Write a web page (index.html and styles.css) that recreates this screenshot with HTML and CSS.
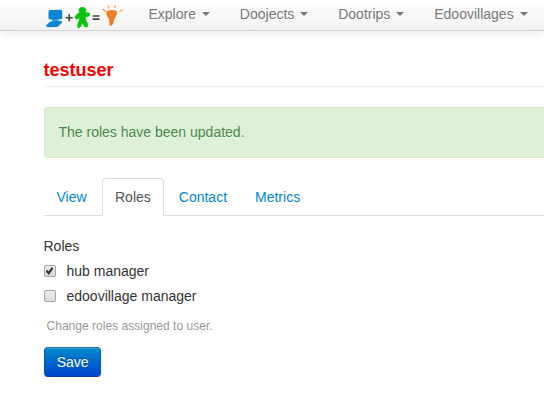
FILE: index.html
```html
<!DOCTYPE html>
<html lang="en">
<head>
<meta charset="utf-8">
<title>testuser</title>
<link rel="stylesheet" href="styles.css">
</head>
<body>
<header class="navbar">
  <a class="brand" href="#" aria-label="Home">
    <svg width="80" height="30" viewBox="0 0 80 30">
      <g fill="#0c86d4">
        <path d="M3.500 11.500Q3.500 10 5 10L15.500 9.800Q17.200 9.800 17.200 11.300L17.200 17.700Q17.200 19.200 15.700 19.200L5 19.500Q3.500 19.500 3.500 18Z"/>
        <path d="M7 19H13.500V22H7Z"/>
        <path d="M5 21.700L16 21Q18 21.500 16.700 23L13.500 26Q12.800 27 11.500 27L2.500 27.200Q.6 26.500 1.500 25Z"/>
      </g>
      <path d="M5.500 20.300H15.500" stroke="#8fcaf0" stroke-width=".6"/>
      <path d="M20.700 17.700H27.700M24.200 14.200V21.200" stroke="#444" stroke-width="1.600"/>
      <path d="M37.300 7.300C40.300 7.300 41.700 9.300 40.700 11.500L40.500 12.700L43.500 12.700Q45.200 13.200 44.800 15Q44.400 16.300 43 16.500L40.300 17L40.800 20L42.800 24Q43.600 26.500 41.800 27.200Q40.300 27.800 39.300 26L37.200 23L35.800 26.500Q34.300 28.700 32.800 27.500Q31.800 26.500 32.800 24L34.300 20V17.500L32.800 19Q30.300 19.500 30 17.500Q30 16 31.200 15L34.500 12.300Q32.400 7.600 37.300 7.300Z" fill="#06c40d" stroke="#06c40d" stroke-width=".5"/>
      <path d="M47.600 16H54.500M47.600 19.100H54.500" stroke="#444" stroke-width="1.600"/>
      <g transform="translate(.5 0)">
        <path d="M60.700 13.500C60.500 9.300 71.500 9 71.700 12.500C71.600 15 69.500 17.500 68.500 20.500L67.700 23.500Q65.500 27.800 63.900 24.500L63.700 19.500Q60.800 16 60.700 13.500Z" fill="#ee7d22"/>
        <path d="M64 12.500L66 16L69.500 12" fill="none" stroke="#f5a25e" stroke-width=".6"/>
        <path d="M57 9L60.500 11.700M62.200 5.500L63.700 8.500M69.800 5L69 8M73.700 11.500L77.500 10" stroke="#f29a58" stroke-width="1.100"/>
      </g>
    </svg>
  </a>
  <nav class="menu">
    <a href="#">Explore <b class="caret"></b></a>
    <a href="#">Doojects <b class="caret"></b></a>
    <a href="#">Dootrips <b class="caret"></b></a>
    <a href="#">Edoovillages <b class="caret"></b></a>
  </nav>
</header>
<main class="content">
  <h1 class="page-title">testuser</h1>
  <div class="alert">The roles have been updated.</div>
  <ul class="tabs">
    <li><a href="#">View</a></li>
    <li class="active"><a href="#">Roles</a></li>
    <li><a href="#">Contact</a></li>
    <li><a href="#">Metrics</a></li>
  </ul>
  <form>
    <div class="group-label">Roles</div>
    <label class="option"><input type="checkbox" checked>hub manager</label>
    <label class="option"><input type="checkbox">edoovillage manager</label>
    <p class="help">Change roles assigned to user.</p>
    <button class="save" type="button">Save</button>
  </form>
</main>
</body>
</html>
```
FILE: styles.css
```css
* { box-sizing: border-box; }
body {
  margin: 0;
  overflow: hidden;
  background: #fff;
  color: #333;
  font: 14px/20px "Liberation Sans", Arial, sans-serif;
}
a { color: #0088cc; text-decoration: none; }
.navbar {
  display: flex;
  height: 31px;
  padding-left: 45px;
  border-bottom: 1px solid #d4d4d4;
  background: linear-gradient(#fefefe, #f2f2f2);
  box-shadow: 0 1px 10px rgba(0, 0, 0, .1);
}
.brand { width: 88.500px; height: 30px; }
.brand svg { display: block; overflow: visible; }
.menu { display: flex; white-space: nowrap; }
.menu a {
  padding: 4px 15px 6px;
  color: #777;
  text-shadow: 0 1px 0 #fff;
}
.caret {
  display: inline-block;
  margin: 8px 0 0 2px;
  vertical-align: top;
  border-top: 4px solid #777;
  border-right: 4px solid transparent;
  border-left: 4px solid transparent;
}
.content { padding: 29px 0 0 43.500px; }
.page-title {
  margin: 0 0 20px;
  height: 27px;
  border-bottom: 1px solid #eee;
  color: #f00;
  font-size: 18px;
  line-height: 20px;
}
.alert {
  height: 51px;
  margin-bottom: 20px;
  padding: 14px;
  border: 1px solid #d6e9c6;
  border-right: 0;
  border-radius: 4px 0 0 4px;
  background: #dff0d8;
  color: #468847;
  text-shadow: 0 1px 0 rgba(255, 255, 255, .5);
}
.tabs {
  display: flex;
  margin: 0 0 20px;
  padding: 0;
  border-bottom: 1px solid #ddd;
  list-style: none;
}
.tabs li { margin-bottom: -1px; }
.tabs li:first-child { margin-right: .4px; }
.tabs a {
  display: block;
  margin-right: 2px;
  padding: 8px 12px;
  border: 1px solid transparent;
  border-radius: 4px 4px 0 0;
}
.tabs .active a {
  border-color: #ddd #ddd #fff;
  background: #fff;
  color: #555;
}
.group-label { margin-bottom: 5px; }
.option {
  display: flex;
  align-items: center;
  height: 20px;
  margin-bottom: 5px;
}
.option input {
  appearance: none;
  position: relative;
  width: 12px;
  height: 12px;
  margin: 0 11px 0 0;
  border: 1px solid #a5a5a5;
  border-radius: 2px;
  background: linear-gradient(#ececec, #dcdcdc);
}
.option input:checked::after {
  content: "";
  position: absolute;
  top: 1px;
  left: 1px;
  width: 8px;
  height: 8px;
  background: #3d3d3d;
  clip-path: polygon(0 55%, 22% 35%, 38% 54%, 78% 0, 100% 18%, 42% 100%);
}
.help {
  margin: 10px 0 11px 3px;
  color: #999;
  font-size: 12.050px;
}
.save {
  display: block;
  height: 30px;
  width: 57.400px;
  padding: 4px 0 4px 1px;
  border: 1px solid;
  border-color: #1072b0 #0a5db5 #0b3d9c;
  border-radius: 4px;
  background: linear-gradient(#0088cc, #0044cc);
  box-shadow: inset 0 1px 0 rgba(255, 255, 255, .2), 0 1px 2px rgba(0, 0, 0, .05);
  color: #fff;
  font: inherit;
  text-shadow: 0 -1px 0 rgba(0, 0, 0, .25);
}
```
